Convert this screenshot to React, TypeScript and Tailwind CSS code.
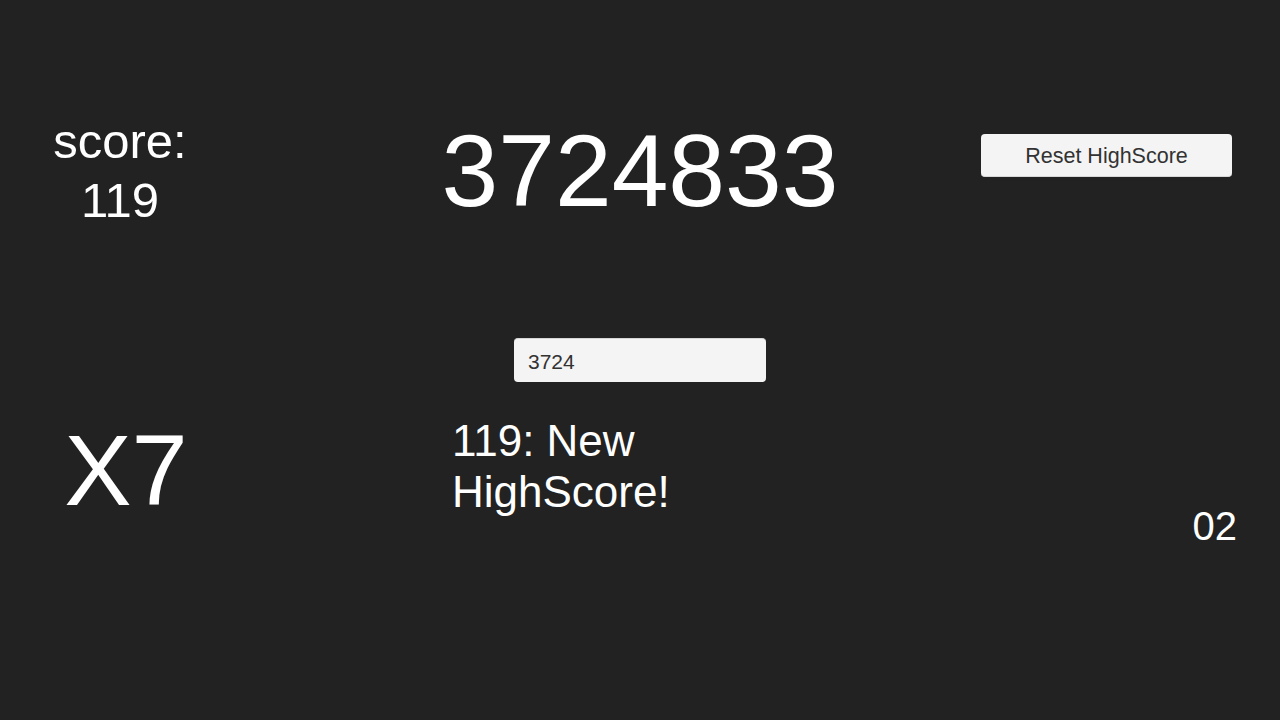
import React from "react";

export default function App() {
  return (
    <div className="w-[1280px] h-[720px] bg-[#222222] text-white font-['Liberation_Sans',Arial,sans-serif] overflow-hidden flex flex-col">
      {/* Row A */}
      <div className="h-[300px] grid grid-cols-[1fr_auto_1fr] items-start">
        <div className="flex">
          <div className="w-[240px] mt-[112px] text-center text-[49px] leading-[59px]">
            <div>score:</div>
            <div>119</div>
          </div>
        </div>
        <div className="mt-[120px] text-[102px] leading-none">3724833</div>
        <div className="flex justify-end">
          <button className="mt-[134px] mr-[48px] w-[251px] h-[43px] rounded-[4px] bg-[#f4f4f4] border-b border-[#d8d8d8] text-[#323232] text-[21.5px] leading-none flex items-center justify-center pt-[4px]">
            Reset HighScore
          </button>
        </div>
      </div>
      {/* Row B */}
      <div className="h-[100px] flex justify-center items-start">
        <div className="mt-[38px] w-[252px] h-[44px] rounded-[4px] bg-[#f4f4f4] border-t border-[#d6d6d6] text-[#323232] text-[21px] leading-none flex items-center pl-[14px] pt-[1px]">
          3724
        </div>
      </div>
      {/* Row C */}
      <div className="flex-1 flex items-start">
        <div className="w-[252px] mt-[20px] text-center text-[101px] leading-none">X7</div>
        <div className="ml-[200px] mt-[15px] text-[44px] leading-[51px]">
          <div>119: New</div>
          <div>HighScore!</div>
        </div>
        <div className="flex-1" />
        <div className="mt-[106px] mr-[43px] text-[40px] leading-none">02</div>
      </div>
    </div>
  );
}
